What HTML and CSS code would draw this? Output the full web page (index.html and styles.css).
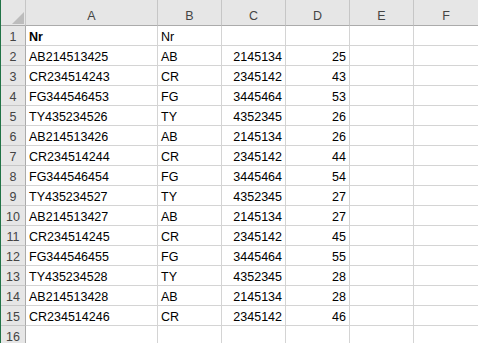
FILE: index.html
```html
<!DOCTYPE html>
<html lang="en">
<head>
  <meta charset="UTF-8" />
  <title>Sheet1</title>
  <link rel="stylesheet" href="styles.css">
</head>
<body>
  <div class="sheet">
    <div class="row head">
      <div class="corner"><svg width="12" height="12" viewBox="0 0 12 12"><polygon points="12,0 12,12 0,12" fill="#bcbcbc"/></svg></div>
      <div class="col">A</div><div class="col">B</div><div class="col">C</div><div class="col">D</div><div class="col">E</div><div class="col">F</div>
    </div>
    <div class="row"><div class="num">1</div><div class="cell bold">Nr</div><div class="cell">Nr</div><div class="cell"></div><div class="cell"></div><div class="cell"></div><div class="cell"></div></div>
    <div class="row"><div class="num">2</div><div class="cell">AB214513425</div><div class="cell">AB</div><div class="cell r">2145134</div><div class="cell r">25</div><div class="cell"></div><div class="cell"></div></div>
    <div class="row"><div class="num">3</div><div class="cell">CR234514243</div><div class="cell">CR</div><div class="cell r">2345142</div><div class="cell r">43</div><div class="cell"></div><div class="cell"></div></div>
    <div class="row"><div class="num">4</div><div class="cell">FG344546453</div><div class="cell">FG</div><div class="cell r">3445464</div><div class="cell r">53</div><div class="cell"></div><div class="cell"></div></div>
    <div class="row"><div class="num">5</div><div class="cell">TY435234526</div><div class="cell">TY</div><div class="cell r">4352345</div><div class="cell r">26</div><div class="cell"></div><div class="cell"></div></div>
    <div class="row"><div class="num">6</div><div class="cell">AB214513426</div><div class="cell">AB</div><div class="cell r">2145134</div><div class="cell r">26</div><div class="cell"></div><div class="cell"></div></div>
    <div class="row"><div class="num">7</div><div class="cell">CR234514244</div><div class="cell">CR</div><div class="cell r">2345142</div><div class="cell r">44</div><div class="cell"></div><div class="cell"></div></div>
    <div class="row"><div class="num">8</div><div class="cell">FG344546454</div><div class="cell">FG</div><div class="cell r">3445464</div><div class="cell r">54</div><div class="cell"></div><div class="cell"></div></div>
    <div class="row"><div class="num">9</div><div class="cell">TY435234527</div><div class="cell">TY</div><div class="cell r">4352345</div><div class="cell r">27</div><div class="cell"></div><div class="cell"></div></div>
    <div class="row"><div class="num">10</div><div class="cell">AB214513427</div><div class="cell">AB</div><div class="cell r">2145134</div><div class="cell r">27</div><div class="cell"></div><div class="cell"></div></div>
    <div class="row"><div class="num">11</div><div class="cell">CR234514245</div><div class="cell">CR</div><div class="cell r">2345142</div><div class="cell r">45</div><div class="cell"></div><div class="cell"></div></div>
    <div class="row"><div class="num">12</div><div class="cell">FG344546455</div><div class="cell">FG</div><div class="cell r">3445464</div><div class="cell r">55</div><div class="cell"></div><div class="cell"></div></div>
    <div class="row"><div class="num">13</div><div class="cell">TY435234528</div><div class="cell">TY</div><div class="cell r">4352345</div><div class="cell r">28</div><div class="cell"></div><div class="cell"></div></div>
    <div class="row"><div class="num">14</div><div class="cell">AB214513428</div><div class="cell">AB</div><div class="cell r">2145134</div><div class="cell r">28</div><div class="cell"></div><div class="cell"></div></div>
    <div class="row"><div class="num">15</div><div class="cell">CR234514246</div><div class="cell">CR</div><div class="cell r">2345142</div><div class="cell r">46</div><div class="cell"></div><div class="cell"></div></div>
    <div class="row"><div class="num">16</div><div class="cell"></div><div class="cell"></div><div class="cell"></div><div class="cell"></div><div class="cell"></div><div class="cell"></div></div>
  </div>
</body>
</html>
```

FILE: styles.css
```css
* {
  margin: 0;
  padding: 0;
  box-sizing: border-box;
}

body {
  background: #fff;
  width: 478px;
  height: 343px;
  overflow: hidden;
  font-family: 'Liberation Sans', Arial, sans-serif;
  font-size: 12.5px;
  color: #000;
}

.sheet {
  border-left: 1px solid #217346;
  height: 343px;
}

.row {
  display: grid;
  grid-template-columns: 25px 132px 64px 64px 64px 64px 65px;
  height: 20px;
}

.row.head {
  height: 26px;
}

.cell,
.num,
.col,
.corner {
  border-right: 1px solid #d4d4d4;
  border-bottom: 1px solid #d4d4d4;
  padding: 3px 3px 0 3px;
  line-height: 16px;
  white-space: nowrap;
  overflow: hidden;
}

.cell.r {
  text-align: right;
}

.bold {
  font-weight: 700;
}

.head > div,
.num {
  background: #e6e6e6;
  color: #444;
  border-right-color: #c6c6c6;
  border-bottom-color: #c6c6c6;
  text-align: center;
}

.head > div {
  border-bottom-color: #ababab;
  padding-top: 8px;
}

.head .corner {
  display: flex;
  justify-content: flex-end;
  align-items: flex-end;
  padding: 0 1px 1px 0;
}

.num {
  border-right-color: #ababab;
  padding-left: 0;
  padding-right: 0;
}
```
